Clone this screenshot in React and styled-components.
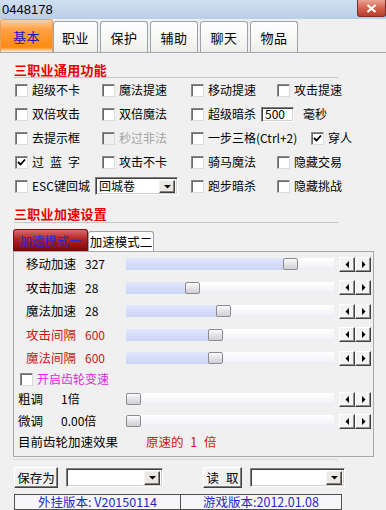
import React from "react";
import styled, { createGlobalStyle } from "styled-components";

const GlobalStyle = createGlobalStyle`
	html, body {
		margin: 0;
		padding: 0;
	}
	body {
		font-family: "Noto Sans CJK SC", "Liberation Sans", sans-serif;
		font-size: 12px;
		line-height: 14px;
		color: #000;
		background: #f1f0f1;
	}
	* {
		box-sizing: border-box;
	}
`;

const Window = styled.div`
	width: 386px;
	height: 510px;
	background: #f1f0f1;
	overflow: hidden;
	display: flex;
	flex-direction: column;
`;

const TitleBar = styled.div`
	height: 19px;
	flex: none;
	display: flex;
	justify-content: space-between;
	background: linear-gradient(#d0e0f2, #b9cde6);
	padding-left: 2px;
`;

const Title = styled.span`
	font-family: "Liberation Sans", sans-serif;
	font-size: 13px;
	line-height: 19px;
`;

const CloseButton = styled.div`
	width: 29px;
	height: 17px;
	border: 1px solid #7a3026;
	border-top: none;
	border-radius: 0 0 3px 3px;
	background: linear-gradient(#eaa494, #d4624e 50%, #b63e2c);
	display: flex;
	align-items: center;
	justify-content: center;
`;

const TabBar = styled.div`
	height: 34px;
	flex: none;
	display: flex;
	align-items: flex-end;
	gap: 2px;
	border-bottom: 1px solid #a4a8b0;
`;

const Tab = styled.div`
	width: ${p => p.$w}px;
	height: ${p => (p.$active ? 33 : 31)}px;
	margin-right: ${p => (p.$active ? -2 : 0)}px;
	border: 1px solid ${p => (p.$active ? "#e8a060" : "#9ca2aa")};
	border-bottom: none;
	border-radius: 3px 3px 0 0;
	background: ${p =>
		p.$active
			? "linear-gradient(#ffd0a0, #ffa044 30%, #ff8a10 85%, #fff0e0)"
			: "linear-gradient(#ffffff, #f6f6f4 60%, #eeeeea)"};
	color: ${p => (p.$active ? "#2412c0" : "#000")};
	font-size: 13px;
	display: flex;
	align-items: center;
	justify-content: center;
	padding-top: 2px;
	letter-spacing: 0.5px;
	position: relative;
	z-index: ${p => (p.$active ? 1 : 0)};
`;

const Body = styled.div`
	flex: 1;
	display: flex;
	flex-direction: column;
`;

const SectionHead = styled.div`
	margin: 0 48px 0 14px;
	height: 25px;
	padding-top: ${p => p.$pt}px;
	border-bottom: 1px solid #c6c6c6;
	color: #e80000;
	font-weight: bold;
	font-size: 13px;
	line-height: 13px;
	letter-spacing: 0.3px;
`;

const CheckGrid = styled.div`
	display: grid;
	grid-template-columns: 87px 89px 86px 1fr;
	grid-auto-rows: 24px;
	padding-left: 15px;
	align-items: center;
`;

const Cell = styled.div`
	grid-column: span ${p => p.$span || 1};
	display: flex;
	align-items: center;
`;

const CheckLabel = styled.label`
	display: flex;
	align-items: center;
	gap: 4px;
	flex: none;
	width: ${p => (p.$w ? `${p.$w}px` : "auto")};
	color: ${p => p.$color || (p.$disabled ? "#a4a4a4" : "#000")};
	white-space: nowrap;
`;

const Box = styled.span`
	width: 13px;
	height: 13px;
	flex: none;
	background: ${p => (p.$disabled ? "#f0f0f0" : "#fff")};
	border: 1px solid;
	border-color: #8a8a8a #dcdcdc #dcdcdc #8a8a8a;
	box-shadow: inset 1px 1px 0 #6a6a6a;
	display: flex;
	align-items: center;
	justify-content: center;
`;

const Spaced = styled.span`
	letter-spacing: ${p => p.$ls}px;
`;

const Sunken = styled.div`
	height: ${p => p.$h}px;
	width: ${p => p.$w}px;
	flex: none;
	background: #fff;
	border: 1px solid;
	border-color: #808080 #ffffff #ffffff #808080;
	box-shadow: inset 1px 1px 0 #404040, inset -1px -1px 0 #d4d0c8;
	display: flex;
	align-items: center;
	padding-left: 3px;
	padding-right: 2px;
	margin-left: ${p => p.$ml || 0}px;
	margin-right: ${p => p.$mr || 0}px;
	font-size: 12px;
`;

const SelectText = styled.span`
	flex: 1;
	white-space: nowrap;
`;

const DropButton = styled.span`
	width: 16px;
	height: ${p => p.$h || 14}px;
	flex: none;
	background: #ece9e4;
	border: 1px solid;
	border-color: #f4f4f4 #404040 #404040 #f4f4f4;
	box-shadow: inset -1px -1px 0 #808080;
	display: flex;
	align-items: center;
	justify-content: center;
`;

const InnerTabs = styled.div`
	margin: 6px 0 0 13px;
	height: 22px;
	display: flex;
	align-items: flex-end;
`;

const InnerTab = styled.div`
	width: ${p => p.$w}px;
	height: ${p => (p.$active ? 22 : 20)}px;
	border: 1px solid ${p => (p.$active ? "#7a1010" : "#a0a0a0")};
	border-bottom: none;
	border-radius: 3px 3px 0 0;
	background: ${p =>
		p.$active ? "linear-gradient(#d86a6a, #b02424 45%, #7e0606)" : "#ffffff"};
	color: ${p => (p.$active ? "#2a2ad8" : "#000")};
	font-size: 12.5px;
	display: flex;
	align-items: center;
	justify-content: center;
	white-space: nowrap;
`;

const Panel = styled.div`
	margin-left: 13px;
	width: 361px;
	height: 206px;
	border: 1px solid #a8a8a8;
	display: flex;
	flex-direction: column;
	padding-top: 0.5px;
`;

const SliderRow = styled.div`
	height: ${p => p.$h}px;
	display: grid;
	grid-template-columns: ${p => p.$cols} 208px 32px;
	column-gap: 0;
	align-items: center;
	padding-left: ${p => p.$pl}px;
	color: ${p => (p.$red ? "#d01414" : "#000")};
	font-size: 12.5px;
`;

const Value = styled.span`
	font-size: 12px;
`;

const Track = styled.div`
	position: relative;
	width: 208px;
	height: 12px;
	background: linear-gradient(#ffffff, #f6f6fb 60%, #ececf4);
	border-radius: 1px;
`;

const Fill = styled.div`
	position: absolute;
	left: 0;
	top: 0;
	bottom: 0;
	background: linear-gradient(#e2e7fc, #cbd4f7);
`;

const Thumb = styled.div`
	position: absolute;
	top: 0;
	width: 15px;
	height: 12px;
	border: 1px solid #8c8c90;
	border-radius: 2px;
	background: linear-gradient(#fdfdfd, #e4e4e8 50%, #cfcfd4);
`;

const Spin = styled.div`
	display: flex;
	margin-left: 5px;
	width: 32px;
`;

const SpinButton = styled.span`
	width: 16px;
	height: 15px;
	background: #f4f3f4;
	border: 1px solid;
	border-color: #ffffff #404040 #404040 #ffffff;
	box-shadow: inset -1px -1px 0 #909090;
	display: flex;
	align-items: center;
	justify-content: center;
`;

const GearToggle = styled.div`
	height: 18px;
	display: flex;
	align-items: center;
	padding-left: 6px;
`;

const Effect = styled.div`
	height: 20px;
	display: flex;
	align-items: center;
	padding-left: 4px;
	font-size: 12.5px;
`;

const EffectValue = styled.span`
	margin-left: 28px;
	color: #d01414;
	word-spacing: 4px;
`;

const Rule = styled.div`
	margin: 2px 48px 0 13px;
	height: 1px;
	background: #d8d8d8;
	flex: none;
`;

const BottomRow = styled.div`
	margin-top: 7px;
	height: 21px;
	padding-left: 14px;
	display: flex;
	align-items: center;
`;

const Button = styled.div`
	width: ${p => p.$w}px;
	height: 21px;
	flex: none;
	background: #f3f2f3;
	border: 1px solid;
	border-color: #ffffff #404040 #404040 #ffffff;
	box-shadow: inset -1px -1px 0 #808080;
	display: flex;
	align-items: center;
	justify-content: center;
	font-size: 12.5px;
	margin-right: ${p => p.$mr}px;
	word-spacing: 4px;
`;

const StatusBar = styled.div`
	margin: 6px 0 0 14px;
	width: 328px;
	height: 16px;
	display: grid;
	grid-template-columns: 165px 1fr;
	border: 1px solid #505050;
	color: #2626c4;
	font-size: 12.5px;
`;

const StatusCell = styled.div`
	display: flex;
	align-items: center;
	justify-content: center;
	border-left: ${p => (p.$divider ? "1px solid #505050" : "none")};
	background: #f6f6f8;
	white-space: nowrap;
`;

const CheckMark = () => (
	<svg width="9" height="9" viewBox="0 0 9 9">
		<path d="M1 4 L3.5 6.5 L8 1.5" fill="none" stroke="#000" strokeWidth="1.8" />
	</svg>
);

const Check = ({ text, checked, disabled, w, color, children }) => (
	<CheckLabel $w={w} $disabled={disabled} $color={color}>
		<Box $disabled={disabled}>{checked && <CheckMark />}</Box>
		{children || text}
	</CheckLabel>
);

const Triangle = ({ dir }) => (
	<svg width="7" height="7" viewBox="0 0 7 7">
		{dir === "left" && <polygon points="5,0 5,7 1.5,3.5" fill="#000" />}
		{dir === "right" && <polygon points="2,0 2,7 5.5,3.5" fill="#000" />}
		{dir === "down" && <polygon points="0,2 7,2 3.5,5.5" fill="#000" />}
	</svg>
);

const Select = ({ value, w, h = 19, ml, mr }) => (
	<Sunken $w={w} $h={h} $ml={ml} $mr={mr}>
		<SelectText>{value}</SelectText>
		<DropButton $h={h - 5}>
			<Triangle dir="down" />
		</DropButton>
	</Sunken>
);

const Slider = ({ pos }) => {
	const left = Math.round(pos * 193);
	return (
		<Track>
			<Fill style={{ width: left + 1 }} />
			<Thumb style={{ left }} />
		</Track>
	);
};

const Spinner = () => (
	<Spin>
		<SpinButton>
			<Triangle dir="left" />
		</SpinButton>
		<SpinButton>
			<Triangle dir="right" />
		</SpinButton>
	</Spin>
);

const tabs = [
	{ name: "基本", w: 53, active: true },
	{ name: "职业", w: 45 },
	{ name: "保护", w: 48 },
	{ name: "辅助", w: 48 },
	{ name: "聊天", w: 48 },
	{ name: "物品", w: 48 }
];

const speeds = [
	{ label: "移动加速", value: "327", pos: 0.813 },
	{ label: "攻击加速", value: "28", pos: 0.306 },
	{ label: "魔法加速", value: "28", pos: 0.466 },
	{ label: "攻击间隔", value: "600", pos: 0.425, red: true },
	{ label: "魔法间隔", value: "600", pos: 0.425, red: true }
];

const gears = [
	{ label: "粗调", value: "1倍" },
	{ label: "微调", value: "0.00倍" }
];

const App = () => (
	<Window>
		<GlobalStyle />
		<TitleBar>
			<Title>0448178</Title>
			<CloseButton>
				<svg width="11" height="9" viewBox="0 0 11 9">
					<path d="M1.5 1 L9.5 8 M9.5 1 L1.5 8" stroke="#fff" strokeWidth="2.2" />
				</svg>
			</CloseButton>
		</TitleBar>

		<TabBar>
			{tabs.map(t => (
				<Tab key={t.name} $w={t.w} $active={t.active}>
					{t.name}
				</Tab>
			))}
		</TabBar>

		<Body>
			<SectionHead $pt={10}>三职业通用功能</SectionHead>
			<CheckGrid>
				<Cell><Check text="超级不卡" /></Cell>
				<Cell><Check text="魔法提速" /></Cell>
				<Cell><Check text="移动提速" /></Cell>
				<Cell><Check text="攻击提速" /></Cell>

				<Cell><Check text="双倍攻击" /></Cell>
				<Cell><Check text="双倍魔法" /></Cell>
				<Cell $span={2}>
					<Check text="超级暗杀" />
					<Sunken $w={33} $h={15} $ml={5} $mr={9}>500</Sunken>
					毫秒
				</Cell>

				<Cell><Check text="去提示框" /></Cell>
				<Cell><Check text="秒过非法" disabled /></Cell>
				<Cell $span={2}>
					<Check w={120} text="一步三格(Ctrl+2)" />
					<Check text="穿人" checked />
				</Cell>

				<Cell>
					<Check checked>
						<Spaced $ls={6}>过蓝字</Spaced>
					</Check>
				</Cell>
				<Cell><Check text="攻击不卡" /></Cell>
				<Cell><Check text="骑马魔法" /></Cell>
				<Cell><Check text="隐藏交易" /></Cell>

				<Cell $span={2}>
					<Check w={80} text="ESC键回城" />
					<Select value="回城卷" w={83} h={18} />
				</Cell>
				<Cell><Check text="跑步暗杀" /></Cell>
				<Cell><Check text="隐藏挑战" /></Cell>
			</CheckGrid>

			<SectionHead $pt={9}>三职业加速设置</SectionHead>
			<InnerTabs>
				<InnerTab $w={75} $active>加速模式一</InnerTab>
				<InnerTab $w={66}>加速模式二</InnerTab>
			</InnerTabs>

			<Panel>
				{speeds.map(s => (
					<SliderRow key={s.label} $h={23.5} $cols="59px 41px" $pl={12} $red={s.red}>
						<span>{s.label}</span>
						<Value>{s.value}</Value>
						<Slider pos={s.pos} />
						<Spinner />
					</SliderRow>
				))}

				<GearToggle>
					<Check text="开启齿轮变速" color="#e028e0" />
				</GearToggle>

				{gears.map(g => (
					<SliderRow key={g.label} $h={22} $cols="43px 65px" $pl={4}>
						<span>{g.label}</span>
						<Value>{g.value}</Value>
						<Slider pos={0} />
						<Spinner />
					</SliderRow>
				))}

				<Effect>
					目前齿轮加速效果
					<EffectValue>原速的 1 倍</EffectValue>
				</Effect>
			</Panel>

			<Rule />

			<BottomRow>
				<Button $w={44} $mr={8}>保存为</Button>
				<Select value="" w={97} mr={40} />
				<Button $w={39} $mr={8}>读 取</Button>
				<Select value="" w={95} />
			</BottomRow>

			<StatusBar>
				<StatusCell>外挂版本: V20150114</StatusCell>
				<StatusCell $divider>游戏版本:2012.01.08</StatusCell>
			</StatusBar>
		</Body>
	</Window>
);

export default App;
